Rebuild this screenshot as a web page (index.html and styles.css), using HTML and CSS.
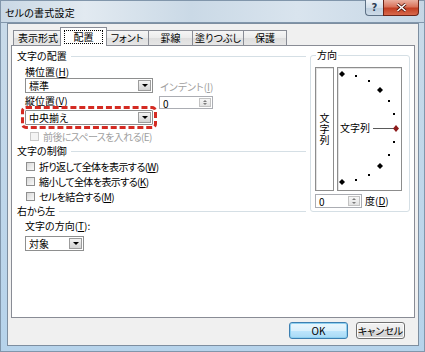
FILE: index.html
```html
<!DOCTYPE html>
<html lang="ja">
<head>
    <meta charset="UTF-8">
    <title>セルの書式設定</title>
    <link rel="stylesheet" href="styles.css">
</head>
<body>

<div class="window">
    <!-- タイトルバー -->
    <div class="titlebar">
        <span class="title">セルの書式設定</span>
        <div class="caption-buttons">
            <span class="cap-btn cap-help">?</span>
            <span class="cap-btn cap-close">
                <svg width="11" height="9" viewBox="0 0 11 9"><path d="M1.5 1l8 7M9.5 1l-8 7" stroke="#4a1208" stroke-width="3"/><path d="M1.5 1l8 7M9.5 1l-8 7" stroke="#fff" stroke-width="1.6"/></svg>
            </span>
        </div>
    </div>

    <div class="client">
        <!-- タブ -->
        <div class="tabs">
            <div class="tab tab-w1">表示形式</div>
            <div class="tab tab-active"><span class="focus">配置</span></div>
            <div class="tab tab-w3">フォント</div>
            <div class="tab tab-w4">罫線</div>
            <div class="tab tab-w5">塗りつぶし</div>
            <div class="tab tab-w6">保護</div>
        </div>

        <div class="pane">
            <div class="col-left">
                <div class="section-head"><span>文字の配置</span></div>
                <div class="label sub label-h">横位置(<u>H</u>)</div>
                <div class="row-pos">
                    <div class="combos">
                        <div class="combo combo-wide"><span>標準</span><i class="drop"></i></div>
                        <div class="label label-v">縦位置(<u>V</u>)</div>
                        <div class="combo combo-wide combo-mark"><span>中央揃え</span><i class="drop"></i></div>
                    </div>
                    <div class="indent">
                        <div class="label disabled">インデント(<u>I</u>)</div>
                        <div class="spin spin-indent"><span>0</span><i class="spin-btn"><b class="up"></b><b class="down"></b></i></div>
                    </div>
                </div>
                <div class="check check-space disabled"><i class="box"></i>前後にスペースを入れる(E)</div>

                <div class="section-head head-ctrl"><span>文字の制御</span></div>
                <div class="check"><i class="box"></i>折り返して全体を表示する(<u>W</u>)</div>
                <div class="check"><i class="box"></i>縮小して全体を表示する(<u>K</u>)</div>
                <div class="check"><i class="box"></i>セルを結合する(<u>M</u>)</div>

                <div class="section-head head-rtl"><span>右から左</span></div>
                <div class="label sub label-dir">文字の方向(<u>T</u>):</div>
                <div class="combo combo-small"><span>対象</span><i class="drop"></i></div>
            </div>

            <fieldset class="orient">
                <legend>方向</legend>
                <div class="dial-row">
                    <div class="vbox"><span>文字列</span></div>
                    <div class="dial">
                        <svg width="63" height="122" viewBox="0 0 63 122">
                            <polygon points="4,3 7,6 4,9 1,6" fill="#000"/>
                            <rect x="17" y="7" width="2" height="2" fill="#000"/>
                            <rect x="30" y="12" width="2" height="2" fill="#000"/>
                            <polygon points="42,19 45,22 42,25 39,22" fill="#000"/>
                            <rect x="50" y="32" width="2" height="2" fill="#000"/>
                            <rect x="55" y="45" width="2" height="2" fill="#000"/>
                            <rect x="55" y="73" width="2" height="2" fill="#000"/>
                            <rect x="50" y="86" width="2" height="2" fill="#000"/>
                            <polygon points="42,95 45,98 42,101 39,98" fill="#000"/>
                            <rect x="30" y="106" width="2" height="2" fill="#000"/>
                            <rect x="17" y="111" width="2" height="2" fill="#000"/>
                            <polygon points="4,111 7,114 4,117 1,114" fill="#000"/>
                            <text x="2" y="64" class="dial-text">文字列</text>
                            <line x1="35" y1="60.5" x2="56" y2="60.5" stroke="#5a5a5a" stroke-width="1"/>
                            <polygon points="58,57 61,60.5 58,64 55,60.5" fill="#8e1c1c"/>
                        </svg>
                    </div>
                </div>
                <div class="deg-row">
                    <div class="spin spin-deg"><span>0</span><i class="spin-btn"><b class="up"></b><b class="down"></b></i></div>
                    <span class="deg-label">度(<u>D</u>)</span>
                </div>
            </fieldset>
        </div>

        <div class="buttons">
            <button class="btn btn-default">OK</button>
            <button class="btn">キャンセル</button>
        </div>
    </div>
</div>

</body>
</html>
```

FILE: styles.css
```css
* {
    box-sizing: border-box;
}

body {
    margin: 0;
    font-family: "Noto Sans CJK JP", sans-serif;
    font-size: 10px;
    font-feature-settings: "palt";
    color: #000;
    background-color: #b8d3ea;
}

u {
    text-decoration: underline;
    text-underline-offset: 1px;
}

/* ウィンドウ枠 */
.window {
    width: 425px;
    height: 352px;
    display: flex;
    flex-direction: column;
    background: linear-gradient(180deg, #d3dfea 0, #c8dae9 24px, #b6d3eb 100%);
    box-shadow: inset 0 0 0 1px #8196ab;
}

.titlebar {
    height: 23px;
    display: flex;
    justify-content: space-between;
    align-items: flex-start;
    background: linear-gradient(90deg, #c9d8e5 0, #e2eaf1 20%, #cad9e6 45%, #d9e4ee 70%, #c5d6e5 100%);
    box-shadow: inset 0 0 0 1px #8196ab;
}

.title {
    padding: 6px 0 0 5px;
    font-size: 10px;
    line-height: 13px;
    letter-spacing: 0.2px;
}

.caption-buttons {
    display: flex;
    margin-right: 6px;
}

.cap-btn {
    height: 16px;
    display: flex;
    align-items: center;
    justify-content: center;
    border: 1px solid #5d7186;
    border-top: none;
}

.cap-help {
    width: 18px;
    border-radius: 0 0 0 4px;
    border-right: none;
    background: linear-gradient(180deg, #eef3f8 0, #d3dfea 50%, #bccddd 51%, #cddbe8 100%);
    color: #2c3e55;
    font-family: "DejaVu Sans", sans-serif;
    font-size: 10px;
    font-weight: bold;
}

.cap-close {
    width: 36px;
    border-color: #6b2418;
    border-radius: 0 0 4px 0;
    background: linear-gradient(180deg, #eab0a0 0, #d9735b 45%, #c23e22 55%, #d8694c 100%);
}

/* クライアント領域 */
.client {
    flex: 1;
    margin: 0 6px 6px 7px;
    padding: 3px 3px 6px 3px;
    display: flex;
    flex-direction: column;
    background-color: #f0f0f0;
    border: 1px solid #7d8ea0;
}

.tabs {
    height: 18px;
    display: flex;
    align-items: flex-end;
    padding-left: 2px;
    position: relative;
    z-index: 1;
}

.tab {
    height: 15px;
    line-height: 14px;
    text-align: center;
    border: 1px solid #898c95;
    border-bottom: none;
    margin-right: -1px;
    background: linear-gradient(180deg, #f6f6f6 0, #ebebeb 50%, #dedede 51%, #e6e6e6 100%);
    white-space: nowrap;
}

.tab-w1 { width: 50px; }
.tab-w3 { width: 44px; }
.tab-w4 { width: 45px; }
.tab-w5 { width: 52px; }
.tab-w6 { width: 44px; }

.tab-active {
    width: 47px;
    height: 19px;
    margin: 0 -2px -1px -2px;
    padding: 2px 3px 3px;
    background: #fff;
    position: relative;
    z-index: 2;
}

.tab-active .focus {
    display: block;
    height: 14px;
    line-height: 12px;
    border: 1px dotted #000;
}

.pane {
    height: 273px;
    display: flex;
    align-items: flex-start;
    background-color: #fff;
    border: 1px solid #898c95;
}

/* 左側 */
.col-left {
    width: 298px;
    padding: 0 4px 0 5px;
}

.section-head {
    display: flex;
    align-items: center;
    line-height: 12px;
    margin-top: 4px;
}

.section-head::after {
    content: "";
    flex: 1;
    height: 1px;
    margin-left: 4px;
    background-color: #d5dfe5;
}

.head-ctrl { margin-top: 3px; }
.head-rtl { margin-top: 3px; }

.label {
    line-height: 12px;
    white-space: nowrap;
}

.sub {
    padding-left: 8px;
}

.label-h {
    margin-top: 4px;
}

.label-v {
    margin-top: 2px;
}

.label-dir {
    margin-top: 3px;
}

.disabled {
    color: #a0a0a0;
}

.row-pos {
    display: flex;
    padding-left: 8px;
}

.combo {
    height: 15px;
    display: flex;
    align-items: center;
    justify-content: space-between;
    padding: 1px 1px 1px 3px;
    background-color: #fff;
    border: 1px solid #8e8f8f;
}

.combo-wide {
    width: 128px;
}

.combo-mark {
    margin-top: 3px;
    outline: 3px dashed #d42a22;
    outline-offset: 1px;
    border-radius: 1px;
}

.combo-small {
    width: 59px;
    margin: 4px 0 0 8px;
}

.drop {
    width: 13px;
    height: 11px;
    display: flex;
    align-items: center;
    justify-content: center;
    border: 1px solid #9c9c9c;
    background: linear-gradient(180deg, #f4f4f4 0, #e3e3e3 50%, #d4d4d4 100%);
}

.drop::after {
    content: "";
    border-left: 3px solid transparent;
    border-right: 3px solid transparent;
    border-top: 3px solid #000;
}

.indent {
    margin: 3px 0 0 6px;
    padding-left: 1px;
}

.spin {
    display: flex;
    align-items: stretch;
    justify-content: space-between;
    padding: 1px 1px 1px 3px;
    line-height: 11px;
    background-color: #fff;
    border: 1px solid #abadb3;
}

.spin-indent {
    width: 54px;
    height: 13px;
    margin: 3px 0 0 -1px;
}

.spin-btn {
    width: 12px;
    display: flex;
    flex-direction: column;
    border: 1px solid #c3c3c3;
    background: linear-gradient(180deg, #f7f7f7, #e2e2e2);
}

.spin-btn b {
    flex: 1;
    display: flex;
    align-items: center;
    justify-content: center;
}

.spin-btn .up::after {
    content: "";
    border-left: 2px solid transparent;
    border-right: 2px solid transparent;
    border-bottom: 2px solid #7b7b7b;
}

.spin-btn .down::after {
    content: "";
    border-left: 2px solid transparent;
    border-right: 2px solid transparent;
    border-top: 2px solid #7b7b7b;
}

.check {
    display: flex;
    align-items: center;
    height: 12px;
    margin-top: 3px;
    padding-left: 9px;
    white-space: nowrap;
    letter-spacing: -0.6px;
}

.check .box {
    width: 9px;
    height: 9px;
    margin-right: 4px;
    border: 1px solid #8f8f8f;
    background: linear-gradient(135deg, #d8d8d8, #fafafa);
}

.check-space {
    margin-top: 5px;
    padding-left: 13px;
}

.check-space .box {
    border-color: #c9c9c9;
    background: #f4f4f4;
}

/* 方向 */
.orient {
    width: 100px;
    margin: 3px 0 0 0;
    padding: 6px 7px 3px 4px;
    border: 1px solid #d5dfe5;
    border-radius: 3px;
    min-width: 0;
}

.orient legend {
    padding: 0 1px;
    margin-left: 1px;
    line-height: 12px;
}

.dial-row {
    display: flex;
    gap: 3px;
}

.vbox,
.dial {
    height: 124px;
    background-color: #fff;
    border: 1px solid #8d8d8d;
    box-shadow: inset 1px 1px 0 #e3e3e3;
}

.vbox {
    width: 19px;
    display: flex;
    align-items: center;
    justify-content: center;
}

.vbox span {
    writing-mode: vertical-rl;
    letter-spacing: 1px;
}

.dial {
    width: 65px;
}

.dial svg {
    display: block;
}

.dial-text {
    font-family: "Noto Sans CJK JP", sans-serif;
    font-size: 10px;
}

.deg-row {
    display: flex;
    align-items: center;
    margin-top: 2px;
}

.spin-deg {
    width: 47px;
    height: 14px;
}

.deg-label {
    margin-left: 3px;
}

/* 下部ボタン */
.buttons {
    display: flex;
    justify-content: flex-end;
    gap: 8px;
    margin-top: 4px;
    padding-right: 10px;
}

.btn {
    height: 17px;
    padding: 0;
    font-family: inherit;
    font-size: 10px;
    font-feature-settings: "palt";
    line-height: 14px;
    color: #000;
    width: 49px;
    border: 1px solid #707070;
    border-radius: 3px;
    background: linear-gradient(180deg, #f2f2f2 0, #ebebeb 50%, #dddddd 51%, #cfcfcf 100%);
    box-shadow: inset 0 0 0 1px #fcfcfc;
}

.btn-default {
    width: 59px;
    border-color: #3c7fb1;
    background: linear-gradient(180deg, #eaf6fd 0, #d9f0fc 50%, #bee6fd 51%, #a7d9f5 100%);
    box-shadow: inset 0 0 0 1px #8ed0f0;
}
```
